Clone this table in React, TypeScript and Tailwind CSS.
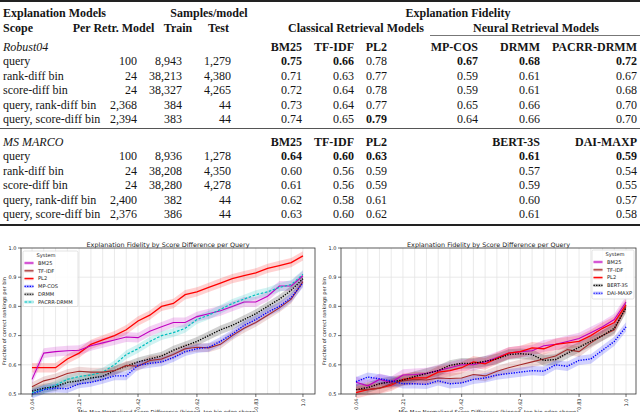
import React from "react";

type Series = { name: string; color: string; dash?: string; width?: number; band: number; values: number[] };

const robust: Series[] = [
  { name: "PL2", color: "#ff0000", width: 1.3, band: 0.016, values: [0.59, 0.59, 0.59, 0.62, 0.64, 0.67, 0.685, 0.7, 0.72, 0.75, 0.77, 0.8, 0.81, 0.84, 0.85, 0.865, 0.88, 0.895, 0.905, 0.915, 0.93, 0.94, 0.95, 0.973] },
  { name: "BM25", color: "#c000c0", width: 1.1, band: 0.017, values: [0.55, 0.64, 0.645, 0.648, 0.65, 0.665, 0.675, 0.685, 0.695, 0.693, 0.715, 0.73, 0.745, 0.745, 0.765, 0.775, 0.785, 0.8, 0.815, 0.815, 0.835, 0.87, 0.87, 0.905] },
  { name: "PACRR-DRMM", color: "#00bfbf", dash: "2.6 1.6", width: 1.2, band: 0.015, values: [0.505, 0.515, 0.53, 0.55, 0.56, 0.565, 0.575, 0.6, 0.635, 0.655, 0.68, 0.7, 0.71, 0.725, 0.755, 0.77, 0.79, 0.81, 0.825, 0.84, 0.85, 0.865, 0.875, 0.91] },
  { name: "DRMM", color: "#000000", dash: "1.3 1.3", width: 1.4, band: 0.015, values: [0.51, 0.52, 0.525, 0.54, 0.545, 0.555, 0.56, 0.58, 0.595, 0.61, 0.62, 0.63, 0.65, 0.665, 0.68, 0.7, 0.72, 0.735, 0.755, 0.775, 0.8, 0.825, 0.855, 0.895] },
  { name: "TF-IDF", color: "#a52a2a", width: 1.1, band: 0.015, values: [0.525, 0.545, 0.555, 0.57, 0.578, 0.575, 0.575, 0.58, 0.598, 0.595, 0.615, 0.62, 0.635, 0.655, 0.66, 0.658, 0.67, 0.7, 0.725, 0.745, 0.77, 0.795, 0.825, 0.885] },
  { name: "MP-COS", color: "#0000ff", dash: "1.3 1.3", width: 1.4, band: 0.015, values: [0.5, 0.515, 0.52, 0.518, 0.535, 0.54, 0.55, 0.562, 0.562, 0.598, 0.605, 0.61, 0.625, 0.645, 0.655, 0.66, 0.68, 0.705, 0.735, 0.755, 0.78, 0.8, 0.83, 0.88] },
];

const marco: Series[] = [
  { name: "BM25", color: "#c000c0", width: 1.1, band: 0.02, values: [0.54, 0.528, 0.55, 0.54, 0.565, 0.567, 0.57, 0.58, 0.59, 0.6, 0.6, 0.61, 0.625, 0.64, 0.645, 0.648, 0.665, 0.67, 0.68, 0.69, 0.71, 0.73, 0.755, 0.815] },
  { name: "PL2", color: "#ff0000", width: 1.3, band: 0.02, values: [0.505, 0.515, 0.52, 0.53, 0.55, 0.555, 0.555, 0.575, 0.58, 0.59, 0.61, 0.603, 0.622, 0.64, 0.645, 0.658, 0.655, 0.67, 0.675, 0.68, 0.7, 0.725, 0.745, 0.805] },
  { name: "TF-IDF", color: "#a52a2a", width: 1.1, band: 0.018, values: [0.515, 0.515, 0.52, 0.535, 0.545, 0.55, 0.548, 0.555, 0.553, 0.555, 0.567, 0.562, 0.578, 0.59, 0.6, 0.61, 0.62, 0.63, 0.652, 0.645, 0.675, 0.7, 0.72, 0.8] },
  { name: "BERT-3S", color: "#000000", dash: "1.3 1.3", width: 1.4, band: 0.018, values: [0.515, 0.522, 0.535, 0.542, 0.548, 0.56, 0.57, 0.58, 0.598, 0.605, 0.605, 0.612, 0.62, 0.635, 0.638, 0.635, 0.615, 0.618, 0.64, 0.66, 0.68, 0.7, 0.725, 0.795] },
  { name: "DAI-MAXP", color: "#0000ff", dash: "1.3 1.3", width: 1.4, band: 0.016, values: [0.542, 0.558, 0.552, 0.545, 0.535, 0.535, 0.533, 0.545, 0.535, 0.538, 0.55, 0.555, 0.565, 0.57, 0.575, 0.58, 0.578, 0.6, 0.595, 0.615, 0.62, 0.65, 0.68, 0.73] },
];

type LegendItem = { name: string; color: string; dash?: string };

const legendRobust: LegendItem[] = [
  { name: "BM25", color: "#c000c0" },
  { name: "TF-IDF", color: "#a52a2a" },
  { name: "PL2", color: "#ff0000" },
  { name: "MP-COS", color: "#0000ff", dash: "1.3 1.3" },
  { name: "DRMM", color: "#000000", dash: "1.3 1.3" },
  { name: "PACRR-DRMM", color: "#00bfbf", dash: "2.6 1.6" },
];

const legendMarco: LegendItem[] = [
  { name: "BM25", color: "#c000c0" },
  { name: "TF-IDF", color: "#a52a2a" },
  { name: "PL2", color: "#ff0000" },
  { name: "BERT-3S", color: "#000000", dash: "1.3 1.3" },
  { name: "DAI-MAXP", color: "#0000ff", dash: "1.3 1.3" },
];

const ticks = [
  { bin: 0, label: "0.04" },
  { bin: 4, label: "0.21" },
  { bin: 9, label: "0.42" },
  { bin: 14, label: "0.62" },
  { bin: 19, label: "0.83" },
  { bin: 23, label: "1.0" },
];

type ChartProps = {
  ox: number;
  x0: number;
  x1: number;
  b0: number;
  step: number;
  series: Series[];
  legend: LegendItem[];
  box: { x: number; y: number; w: number; h: number };
};

function Chart({ ox, x0, x1, b0, step, series, legend, box }: ChartProps) {
  const Y = (v: number) => 395 - (v - 0.5) * 292;
  const X = (i: number) => b0 + i * step;
  const cx = (x0 + x1) / 2;
  const hx = box.x + 1.5;
  const lx = box.x + 15;

  return (
    <svg width={320} height={177} viewBox={`${ox} 236 320 177`} className="block" fontFamily="DejaVu Sans, sans-serif">
      <text x={cx} y={248} fontSize={6.2} textAnchor="middle" textLength={163} lengthAdjust="spacingAndGlyphs" fill="#222">
        Explanation Fidelity by Score Difference per Query
      </text>
      {/* grid */}
      {Array.from({ length: 24 }, (_, i) => (
        <line key={i} x1={X(i)} x2={X(i)} y1={249} y2={395} stroke="#e4e4e4" strokeWidth={0.8} />
      ))}
      {[0.6, 0.7, 0.8, 0.9].map((v) => (
        <line key={v} x1={x0} x2={x1} y1={Y(v)} y2={Y(v)} stroke="#e4e4e4" strokeWidth={0.8} />
      ))}
      {/* bands */}
      {series.map((s) => {
        const up = s.values.map((v, i) => `${X(i)},${Y(v + s.band)}`).join(" ");
        const dn = s.values.map((v, i) => `${X(i)},${Y(v - s.band)}`).reverse().join(" ");
        return <polygon key={s.name + "b"} points={`${up} ${dn}`} fill={s.color} fillOpacity={0.18} />;
      })}
      {series.map((s) => (
        <polyline
          key={s.name}
          points={s.values.map((v, i) => `${X(i)},${Y(v)}`).join(" ")}
          fill="none"
          stroke={s.color}
          strokeWidth={s.width ?? 1.1}
          strokeDasharray={s.dash}
        />
      ))}
      {/* spines */}
      <rect x={x0} y={249} width={x1 - x0} height={146} fill="none" stroke="#333" strokeWidth={0.8} />
      {[0.5, 0.6, 0.7, 0.8, 0.9, 1.0].map((v) => (
        <g key={v}>
          <line x1={x0 - 3} x2={x0} y1={Y(v)} y2={Y(v)} stroke="#333" strokeWidth={0.7} />
          <text x={x0 - 4.5} y={Y(v) + 1.8} fontSize={5} textAnchor="end" fill="#222">
            {v.toFixed(1)}
          </text>
        </g>
      ))}
      {ticks.map((t) => (
        <g key={t.label}>
          <line x1={X(t.bin)} x2={X(t.bin)} y1={395} y2={398} stroke="#333" strokeWidth={0.7} />
          <text transform={`translate(${X(t.bin) + 1.8},${399.5}) rotate(-90)`} fontSize={5} textAnchor="end" fill="#222">
            {t.label}
          </text>
        </g>
      ))}
      <text transform={`translate(${ox + 5.5},322) rotate(-90)`} fontSize={5} textAnchor="middle" fill="#222">
        Fraction of correct rankings per bin
      </text>
      <text x={cx} y={415} fontSize={5.6} textAnchor="middle" textLength={180} lengthAdjust="spacingAndGlyphs" fill="#222">
        Min-Max Normalized Score Difference (binned, top bin edge shown)
      </text>
      {/* legend */}
      <rect x={box.x} y={box.y} width={box.w} height={box.h} rx={1.5} fill="#fff" fillOpacity={0.85} stroke="#d0d0d0" strokeWidth={0.6} />
      <text x={lx - 1.5} y={box.y + 5.8} fontSize={5.1} fill="#222">
        System
      </text>
      {legend.map((l, i) => {
        const y = box.y + 12 + i * 7.8;
        return (
          <g key={l.name}>
            <line x1={hx} x2={hx + 9} y1={y} y2={y} stroke={l.color} strokeOpacity={0.25} strokeWidth={3.2} />
            <line x1={hx} x2={hx + 9} y1={y} y2={y} stroke={l.color} strokeWidth={1.1} strokeDasharray={l.dash} />
            <text x={lx} y={y + 1.8} fontSize={5.1} fill="#222">
              {l.name}
            </text>
          </g>
        );
      })}
    </svg>
  );
}

type Cell = { t: string; b?: boolean; i?: boolean };

const bodyGrid = "grid grid-cols-[100px_37px_45px_49px_71px_52px_33px_91px_62px_97px_3px] h-[14.5px] leading-[14.5px]";

function Row({ cells }: { cells: Cell[] }) {
  return (
    <div className={bodyGrid}>
      {cells.map((c, k) => (
        <div
          key={k}
          className={`whitespace-nowrap ${k === 0 ? "pl-[3px] text-left" : "text-right"} ${c.b ? "font-bold" : ""} ${c.i ? "italic" : ""}`}
        >
          {c.t}
        </div>
      ))}
      <div />
    </div>
  );
}

const c = (t: string, b = false): Cell => ({ t, b });

const robustRows: Cell[][] = [
  [{ t: "Robust04", i: true }, c(""), c(""), c(""), c("BM25", true), c("TF-IDF", true), c("PL2", true), c("MP-COS", true), c("DRMM", true), c("PACRR-DRMM", true)],
  [c("query"), c("100"), c("8,943"), c("1,279"), c("0.75", true), c("0.66", true), c("0.78"), c("0.67", true), c("0.68", true), c("0.72", true)],
  [c("rank-diff bin"), c("24"), c("38,213"), c("4,380"), c("0.71"), c("0.63"), c("0.77"), c("0.59"), c("0.61"), c("0.67")],
  [c("score-diff bin"), c("24"), c("38,327"), c("4,265"), c("0.72"), c("0.64"), c("0.78"), c("0.59"), c("0.61"), c("0.68")],
  [c("query, rank-diff bin"), c("2,368"), c("384"), c("44"), c("0.73"), c("0.64"), c("0.77"), c("0.65"), c("0.66"), c("0.70")],
  [c("query, score-diff bin"), c("2,394"), c("383"), c("44"), c("0.74"), c("0.65"), c("0.79", true), c("0.64"), c("0.66"), c("0.70")],
];

const marcoRows: Cell[][] = [
  [{ t: "MS MARCO", i: true }, c(""), c(""), c(""), c("BM25", true), c("TF-IDF", true), c("PL2", true), c(""), c("BERT-3S", true), c("DAI-MAXP", true)],
  [c("query"), c("100"), c("8,936"), c("1,278"), c("0.64", true), c("0.60", true), c("0.63", true), c(""), c("0.61", true), c("0.59", true)],
  [c("rank-diff bin"), c("24"), c("38,208"), c("4,350"), c("0.60"), c("0.56"), c("0.59"), c(""), c("0.57"), c("0.54")],
  [c("score-diff bin"), c("24"), c("38,280"), c("4,278"), c("0.61"), c("0.56"), c("0.59"), c(""), c("0.59"), c("0.55")],
  [c("query, rank-diff bin"), c("2,400"), c("382"), c("44"), c("0.62"), c("0.58"), c("0.61"), c(""), c("0.60"), c("0.57")],
  [c("query, score-diff bin"), c("2,376"), c("386"), c("44"), c("0.63"), c("0.60"), c("0.62"), c(""), c("0.61"), c("0.58")],
];

export default function App() {
  return (
    <div className="w-[640px] h-[413px] overflow-hidden bg-white text-[#151515] font-['Liberation_Serif','Times_New_Roman',serif] text-[12px]">
      <div className="h-[1.5px] bg-[#222]" />
      <div className="pt-[4.5px]">
        <div className="grid grid-cols-[160px_98px_122px_156px_104px] h-[14.5px] leading-[14.5px] font-bold">
          <div className="pl-[3px] whitespace-nowrap">Explanation Models</div>
          <div className="text-center whitespace-nowrap">Samples/model</div>
          <div />
          <div className="text-center whitespace-nowrap">Explanation Fidelity</div>
          <div />
        </div>
        <div className="grid grid-cols-[72px_83px_5px_36px_4px_37px_43px_152px_8px_192px_8px] h-[14.5px] leading-[14.5px] font-bold">
          <div className="pl-[3px] whitespace-nowrap">Scope</div>
          <div className="text-center whitespace-nowrap">Per Retr. Model</div>
          <div />
          <div className="text-center whitespace-nowrap">Train</div>
          <div />
          <div className="text-center whitespace-nowrap">Test</div>
          <div />
          <div className="text-center whitespace-nowrap">Classical Retrieval Models</div>
          <div />
          <div className="text-center whitespace-nowrap">Neural Retrieval Models</div>
          <div />
        </div>
      </div>
      <div className="flex justify-end">
        <div className="w-[210px] h-[0.6px] bg-[#777]" />
      </div>
      <div className="pt-[4.4px]">
        {robustRows.map((r, k) => (
          <Row key={k} cells={r} />
        ))}
      </div>
      <div className="mt-[1px] h-px bg-[#555]" />
      <div className="pt-[6px]">
        {marcoRows.map((r, k) => (
          <Row key={k} cells={r} />
        ))}
      </div>
      <div className="mt-[2.5px] h-[1.5px] bg-[#222]" />
      <div className="mt-[9.5px] flex">
        <Chart ox={0} x0={21} x1={315} b0={32} step={11.78} series={robust} legend={legendRobust} box={{ x: 23, y: 252, w: 55, h: 55.5 }} />
        <Chart ox={320} x0={341} x1={636} b0={356} step={11.74} series={marco} legend={legendMarco} box={{ x: 592, y: 251, w: 42, h: 49 }} />
      </div>
    </div>
  );
}
